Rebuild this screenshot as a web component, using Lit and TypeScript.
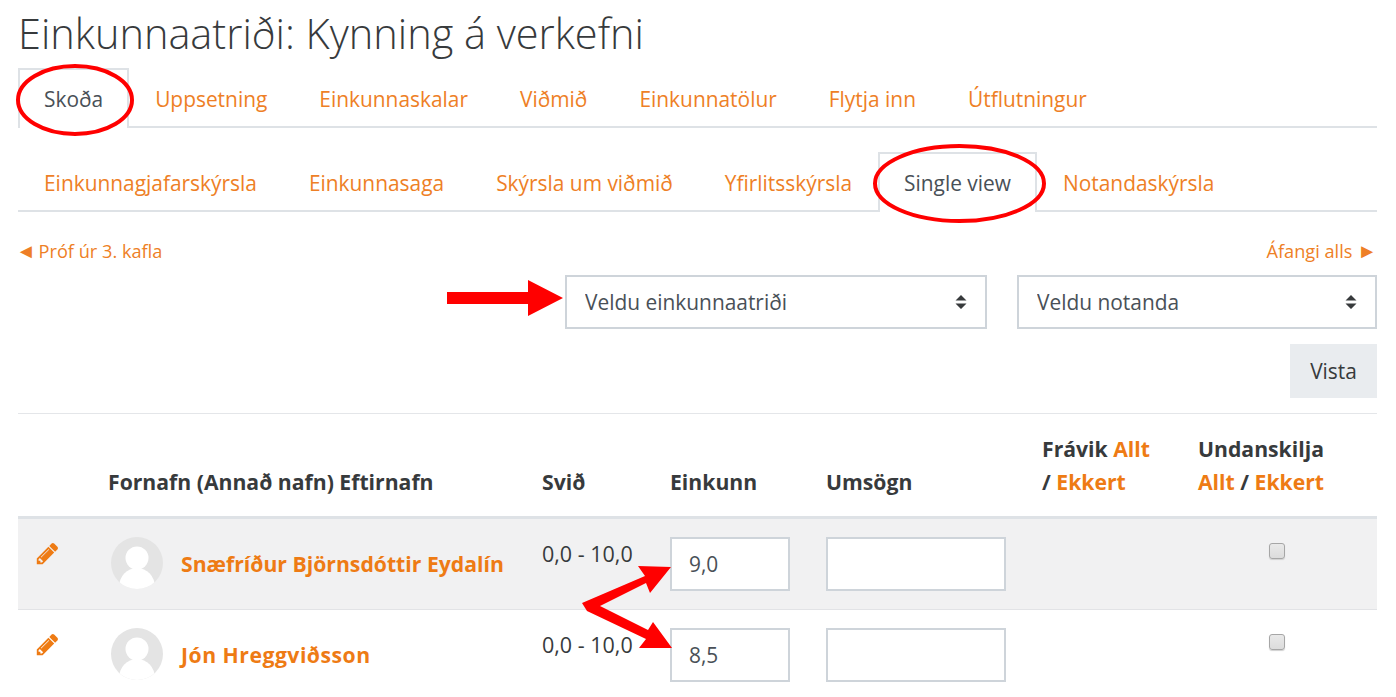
import { LitElement, html, css, svg } from "lit";
import { customElement } from "lit/decorators.js";

const PENCIL = "M491 1536l91-91-235-235-91 91v107h128v128h107zm523-928q0-22-22-22-10 0-17 7l-542 542q-7 7-7 17 0 22 22 22 10 0 17-7l542-542q7-7 7-17zm-54-192l416 416-832 832h-416v-416zm683 96q0 53-37 90l-166 166-416-416 166-165q36-38 90-38 53 0 91 38l235 234q37 39 37 91z";

@customElement("app-root")
export class AppRoot extends LitElement {
  static styles = css`
    :host {
      display: block;
      position: relative;
      width: 1396px;
      height: 697px;
      overflow: hidden;
      background: #fff;
      font-family: "Open Sans", "Noto Sans", sans-serif;
      font-size: 20.9px;
      color: #373a3c;
    }
    a { color: #ee7f26; text-decoration: none; }
    .page { padding: 0 19px 0 18px; }
    h1 {
      margin: 0;
      height: 68px;
      font-size: 41.5px;
      font-weight: 300;
      line-height: 66px;
      color: #373a3c;
    }
    .tabs {
      display: flex;
      height: 60px;
      box-sizing: border-box;
      border-bottom: 2px solid #dee2e6;
    }
    .tabs.sub { margin-top: 24px; }
    .tab {
      display: flex;
      align-items: center;
      height: 60px;
      box-sizing: border-box;
      padding: 0 24px 1px;
      border: 2px solid transparent;
      border-bottom: 0;
    }
    .tab.on {
      border-color: #dee2e6;
      background: #fff;
      color: #495057;
    }
    .pager {
      display: flex;
      justify-content: space-between;
      align-items: center;
      height: 26px;
      margin-top: 26px;
      font-size: 18.2px;
    }
    .arrow { font-size: 20px; line-height: 0; }
    .arrow.prev { margin: 0 -2px 0 -2px; }
    .selects {
      display: flex;
      justify-content: flex-end;
      gap: 30px;
      margin-top: 11px;
    }
    .sel { position: relative; display: block; height: 54px; }
    .sel.a { width: 422px; }
    .sel.b { width: 360px; }
    select {
      appearance: none;
      width: 100%;
      height: 100%;
      box-sizing: border-box;
      border: 2px solid #ced4da;
      border-radius: 0;
      background: #fff;
      padding: 0 18px;
      font: inherit;
      color: #495057;
    }
    .updown { position: absolute; right: 20px; top: 20px; pointer-events: none; }
    .actions { display: flex; justify-content: flex-end; margin-top: 15px; }
    button {
      width: 87px;
      height: 54px;
      border: 0;
      background: #e9ecef;
      font: inherit;
      color: #373a3c;
      padding: 0;
    }
    hr { margin: 15px 0 0; border: 0; border-top: 1px solid #e4e6e9; }
    .row, .head {
      display: grid;
      grid-template-columns: 90px 434px 128px 156px 216px 156px 179px;
    }
    .head {
      height: 105px;
      box-sizing: border-box;
      border-bottom: 3px solid #dee2e6;
      align-items: end;
      padding-bottom: 18px;
      font-weight: 700;
      line-height: 33px;
      font-size: 21.2px;
    }
    .head a { color: #ee7b14; }
    .row { height: 91px; box-sizing: border-box; padding-top: 18px; border-bottom: 1px solid #e2e3e6; }
    .row.odd { background: #f1f1f2; }
    .pen { margin: 4px 0 0 17px; width: 25px; height: 25px; fill: #ee7b14; display: block; }
    .user { display: flex; align-items: center; height: 52px; gap: 18px; padding-left: 3px; font-weight: 700; font-size: 21.2px; }
    .user a { color: #ee7b14; }
    .user a.wide { letter-spacing: 0.5px; }
    .user svg { flex: none; display: block; }
    .range { line-height: 34px; font-size: 21.5px; }
    input[type="text"] {
      display: block;
      box-sizing: border-box;
      height: 54px;
      border: 2px solid #ced4da;
      border-radius: 0;
      padding: 0 17px;
      background: #fff;
      font: inherit;
      color: #495057;
      outline: 0;
    }
    .g { width: 120px; }
    .c { width: 180px; }
    .chk {
      appearance: none;
      display: block;
      margin: 6px 0 0 71px;
      width: 16px;
      height: 16px;
      box-sizing: border-box;
      border: 1px solid #a6a6a6;
      border-radius: 3px;
      background: linear-gradient(#e9e9e9, #dcdcdc);
      box-shadow: 0 1px 1px #d0d0d0;
    }
    .marks { position: absolute; left: 0; top: 0; pointer-events: none; }
  `;

  private avatar(id: string) {
    return html`<svg width="52" height="52" viewBox="0 0 52 52">
      <defs><clipPath id=${id}><circle cx="26" cy="26" r="26"></circle></clipPath></defs>
      <circle cx="26" cy="26" r="26" fill="#e4e4e4"></circle>
      <g clip-path="url(#${id})" fill="#fff">
        <circle cx="26" cy="21" r="11.5"></circle>
        <ellipse cx="26" cy="50" rx="18" ry="19"></ellipse>
      </g>
    </svg>`;
  }

  private row(name: string, grade: string, odd: boolean, id: string) {
    return html`<div class="row ${odd ? "odd" : ""}">
      <svg class="pen" viewBox="0 0 1792 1792"><path d=${PENCIL}></path></svg>
      <div class="user">${this.avatar(id)}<a class=${odd ? "" : "wide"} href="#">${name}</a></div>
      <div class="range">0,0 - 10,0</div>
      <div><input class="g" type="text" .value=${grade} /></div>
      <div><input class="c" type="text" /></div>
      <div></div>
      <div><input class="chk" type="checkbox" /></div>
    </div>`;
  }

  private updown() {
    return html`<svg class="updown" width="12" height="14" viewBox="0 0 12 14" fill="#373a3c">
      <path d="M6 0l5.5 5.5H.5zM6 14L.5 8.5h11z"></path>
    </svg>`;
  }

  render() {
    const top = ["Uppsetning", "Einkunnaskalar", "Viðmið", "Einkunnatölur", "Flytja inn", "Útflutningur"];
    return html`<div class="page">
        <h1>Einkunnaatriði: Kynning á verkefni</h1>
        <nav class="tabs">
          <span class="tab on">Skoða</span>
          ${top.map((t) => html`<a class="tab" href="#">${t}</a>`)}
        </nav>
        <nav class="tabs sub">
          <a class="tab" href="#">Einkunnagjafarskýrsla</a>
          <a class="tab" href="#">Einkunnasaga</a>
          <a class="tab" href="#">Skýrsla um viðmið</a>
          <a class="tab" href="#">Yfirlitsskýrsla</a>
          <span class="tab on">Single view</span>
          <a class="tab" href="#">Notandaskýrsla</a>
        </nav>
        <div class="pager">
          <a href="#"><span class="arrow prev">◄</span> Próf úr 3. kafla</a>
          <a href="#">Áfangi alls <span class="arrow">►</span></a>
        </div>
        <div class="selects">
          <label class="sel a"><select><option>Veldu einkunnaatriði</option></select>${this.updown()}</label>
          <label class="sel b"><select><option>Veldu notanda</option></select>${this.updown()}</label>
        </div>
        <div class="actions"><button>Vista</button></div>
        <hr />
        <div class="head">
          <div></div>
          <div>Fornafn (Annað nafn) Eftirnafn</div>
          <div>Svið</div>
          <div>Einkunn</div>
          <div>Umsögn</div>
          <div>Frávik <a href="#">Allt</a><br />/ <a href="#">Ekkert</a></div>
          <div>Undanskilja<br /><a href="#">Allt</a> / <a href="#">Ekkert</a></div>
        </div>
        ${this.row("Snæfríður Björnsdóttir Eydalín", "9,0", true, "av1")}
        ${this.row("Jón Hreggviðsson", "8,5", false, "av2")}
      </div>
      <svg class="marks" width="1396" height="697" viewBox="0 0 1396 697">
        ${svg`
          <ellipse cx="75" cy="100" rx="57" ry="34" fill="none" stroke="#f00" stroke-width="4"></ellipse>
          <ellipse cx="959.5" cy="183.5" rx="84.5" ry="37.5" fill="none" stroke="#f00" stroke-width="4"></ellipse>
          <path fill="#f00" d="M447 292H528V280L563 298L528 316V304H447Z"></path>
          <path fill="#f00" d="M582 603L645 576L638 566L671 567L650 593L646 583L600 606L648 630L653 622L672 648L639 648L646 639L587 611Z"></path>
        `}
      </svg>`;
  }
}
